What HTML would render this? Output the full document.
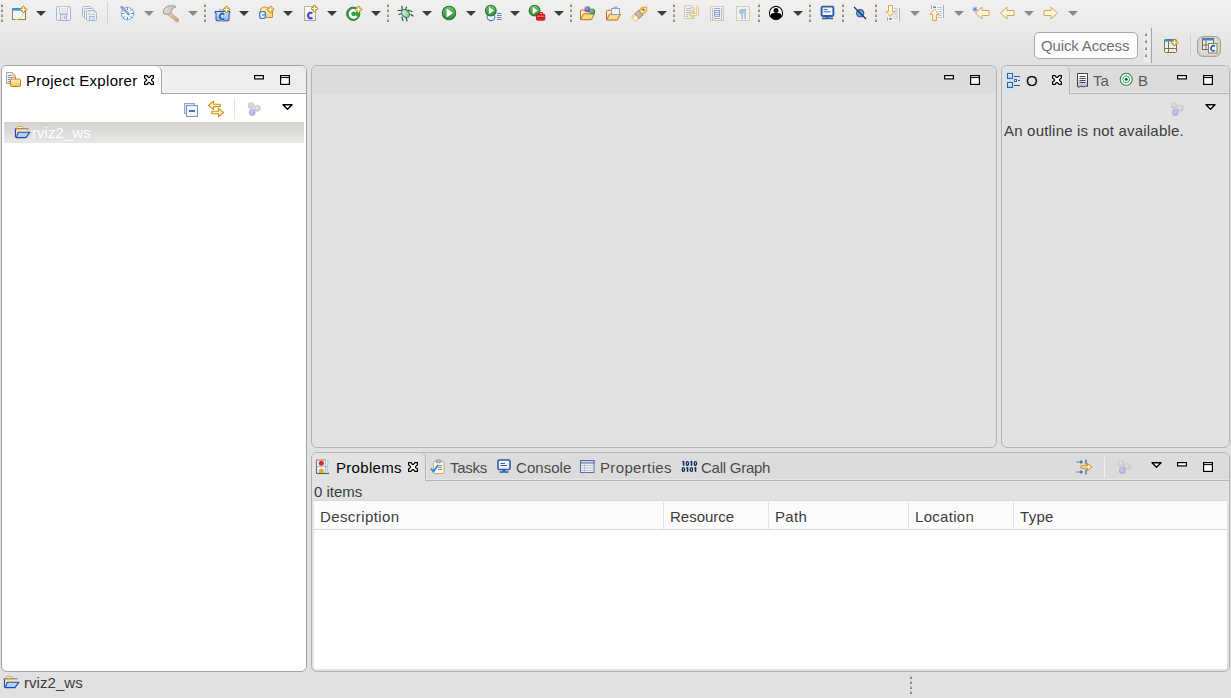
<!DOCTYPE html>
<html><head><meta charset="utf-8">
<style>
*{box-sizing:border-box;margin:0;padding:0}
html,body{width:1231px;height:698px;overflow:hidden}
body{position:relative;background:#e1e1e1;font-family:"Liberation Sans",sans-serif;font-size:15px;color:#3c3c3c}
.abs{position:absolute}
#top{position:absolute;left:0;top:0;width:1231px;height:66px;background:linear-gradient(#f1f0ef,#e1e1e1)}
.panel{position:absolute;border:1px solid #a2a2a2;border-radius:6px;overflow:hidden}
.hdr{position:absolute;left:0;right:0;top:0;height:28px;border-bottom:1px solid #b3b3b3}
.hl{position:absolute}
.txt{position:absolute;white-space:nowrap;line-height:18px}
svg.i{position:absolute;overflow:visible}
</style></head><body>
<div id="top"></div>
<svg class="i" style="left:1px;top:0px" width="2" height="24" viewBox="0 0 2 24" ><rect x="0" y="4" width="2" height="3" fill="#a19c8c"/><rect x="0" y="4" width="2" height="1" fill="#c2beb2"/><rect x="0" y="6" width="2" height="1" fill="#898472"/><rect x="0" y="9" width="2" height="3" fill="#a19c8c"/><rect x="0" y="9" width="2" height="1" fill="#c2beb2"/><rect x="0" y="11" width="2" height="1" fill="#898472"/><rect x="0" y="14" width="2" height="3" fill="#a19c8c"/><rect x="0" y="14" width="2" height="1" fill="#c2beb2"/><rect x="0" y="16" width="2" height="1" fill="#898472"/><rect x="0" y="19" width="2" height="3" fill="#a19c8c"/><rect x="0" y="19" width="2" height="1" fill="#c2beb2"/><rect x="0" y="21" width="2" height="1" fill="#898472"/></svg>
<svg class="i" style="left:11px;top:5px" width="18" height="17" viewBox="0 0 18 17" ><rect x="1.5" y="3.5" width="13" height="11" fill="#eef6fd" stroke="#9a7e3e"/>
<rect x="1" y="3" width="10" height="2.6" fill="#3c92dc"/>
<path d="M4.5 14.4 Q11 13.5 12.5 8" stroke="#f6e4a6" fill="none" stroke-width="1.2"/><path d="M12.5 0.7999999999999998 L16.2 4.5 L12.5 8.2 L8.8 4.5 Z" fill="#c6a028" stroke="#a8861a" stroke-width="0.5"/><path d="M12.5 2.1 V6.9 M10.1 4.5 H14.9" stroke="#fffce8" stroke-width="1.1"/><rect x="11.6" y="3.6" width="1.8" height="1.8" fill="#fffce8"/></svg>
<svg class="i" style="left:36px;top:11px" width="10" height="5" viewBox="0 0 10 5" ><path d="M0 0H10L5 5Z" fill="#3c3c3c"/></svg>
<svg class="i" style="left:56px;top:6px" width="15" height="15" viewBox="0 0 15 15" ><rect x="0.5" y="0.5" width="14" height="14" rx="1.5" fill="#eef1f6" stroke="#aab6cc"/>
<rect x="3.6" y="0.5" width="7.8" height="6.8" fill="#f4f4f0" stroke="#c2cad6"/>
<path d="M5 3H10M5 5H10" stroke="#d2d8e2" stroke-width="0.8"/>
<rect x="4.4" y="8.3" width="6.3" height="6.2" fill="#dfe6f0" stroke="#a4b2ca"/>
<rect x="8.2" y="10" width="1.3" height="3" fill="#a8b6d0"/></svg>
<svg class="i" style="left:82px;top:6px" width="16" height="16" viewBox="0 0 16 16" ><path d="M0.5 1.5 Q0.5 0.5 1.5 0.5 H8.5 L10.5 2.5 V9.5 Q10.5 10.5 9.5 10.5 H1.5 Q0.5 10.5 0.5 9.5 Z" fill="#eef1f6" stroke="#aab6cc"/>
<path d="M2.5 3.5 Q2.5 2.5 3.5 2.5 H10.5 L12.5 4.5 V11.5 Q12.5 12.5 11.5 12.5 H3.5 Q2.5 12.5 2.5 11.5 Z" fill="#eef1f6" stroke="#aab6cc"/>
<path d="M4.5 5.5 Q4.5 4.5 5.5 4.5 H12.5 L14.5 6.5 V13.5 Q14.5 14.5 13.5 14.5 H5.5 Q4.5 14.5 4.5 13.5 Z" fill="#eef1f6" stroke="#aab6cc"/>
<rect x="6.8" y="5" width="5.6" height="3.6" fill="#f0f2f2" stroke="#c2cad6" stroke-width="0.8"/>
<rect x="7.5" y="10.5" width="4.5" height="4" fill="#dfe6f0" stroke="#a4b2ca" stroke-width="0.9"/></svg>
<div class="abs" style="left:107px;top:2px;width:1px;height:22px;background:#d2d2d2"></div>
<svg class="i" style="left:120px;top:6px" width="15" height="15" viewBox="0 0 15 15" ><circle cx="7.5" cy="7.5" r="6.2" fill="#eef4fb" stroke="#7aaee0" stroke-width="1.2" stroke-dasharray="2.4 0.6"/>
<path d="M7.5 1.6V4M7.5 11V13.4M1.6 7.5H4M11 7.5H13.4M3.2 11.8L4.6 10.4M11.8 11.8L10.4 10.4M11.8 3.2L10.4 4.6" stroke="#6a82a8" stroke-width="0.9"/>
<path d="M1.6 1.2 L8.6 8.2" stroke="#8096c0" stroke-width="2.5" stroke-linecap="round"/>
<path d="M2.3 1.9 L8 7.6" stroke="#eef0d0" stroke-width="0.9" stroke-dasharray="1 1"/></svg>
<svg class="i" style="left:144px;top:11px" width="10" height="5" viewBox="0 0 10 5" ><path d="M0 0H10L5 5Z" fill="#8a8a8a"/></svg>
<svg class="i" style="left:162px;top:4px" width="18" height="18" viewBox="0 0 18 18" ><defs><linearGradient id="ghd" x1="0" y1="0" x2="1" y2="0"><stop offset="0" stop-color="#e8d2b2"/><stop offset="1" stop-color="#c9a57a"/></linearGradient></defs>
<path d="M6.8 7 L16.6 15.6 Q17.2 18 14.6 17.9 L4.6 9.6Z" fill="url(#ghd)" stroke="#c09a70" stroke-width="0.7"/>
<path d="M1.2 8.5 Q1.2 5 4 3 Q5.5 1.8 8 1.8 H12.5 Q13.8 2 13.5 3.2 L10 4.6 L9 8.4 L6.2 10.6 L3.6 10 Q1.2 10 1.2 8.5Z" fill="#cfcfcf" stroke="#929292" stroke-width="0.9"/>
<path d="M3 8 Q3.5 5 6 3.8" stroke="#efefef" stroke-width="0.9" fill="none"/></svg>
<svg class="i" style="left:188px;top:11px" width="10" height="5" viewBox="0 0 10 5" ><path d="M0 0H10L5 5Z" fill="#8a8a8a"/></svg>
<svg class="i" style="left:204px;top:0px" width="2" height="24" viewBox="0 0 2 24" ><rect x="0" y="4" width="2" height="3" fill="#a19c8c"/><rect x="0" y="4" width="2" height="1" fill="#c2beb2"/><rect x="0" y="6" width="2" height="1" fill="#898472"/><rect x="0" y="9" width="2" height="3" fill="#a19c8c"/><rect x="0" y="9" width="2" height="1" fill="#c2beb2"/><rect x="0" y="11" width="2" height="1" fill="#898472"/><rect x="0" y="14" width="2" height="3" fill="#a19c8c"/><rect x="0" y="14" width="2" height="1" fill="#c2beb2"/><rect x="0" y="16" width="2" height="1" fill="#898472"/><rect x="0" y="19" width="2" height="3" fill="#a19c8c"/><rect x="0" y="19" width="2" height="1" fill="#c2beb2"/><rect x="0" y="21" width="2" height="1" fill="#898472"/></svg>
<svg class="i" style="left:214px;top:5px" width="18" height="17" viewBox="0 0 18 17" ><defs><linearGradient id="gcp" x1="0" y1="0" x2="0" y2="1"><stop offset="0" stop-color="#d4eafc"/><stop offset="1" stop-color="#80b4ec"/></linearGradient></defs>
<rect x="5.5" y="4.6" width="4" height="1.8" fill="#f6c8a8" stroke="#b09080" stroke-width="0.5"/>
<path d="M1 6.5 H16 V7.8 H15 V14.8 Q15 15.8 14 15.8 H3 Q2 15.8 2 14.8 V7.8 H1Z" fill="url(#gcp)" stroke="#2846b8" stroke-width="1"/>
<path d="M10.2 9.6 A2.5 3 0 1 0 10.2 13.4" stroke="#ffffff" stroke-width="3" fill="none" opacity="0.6"/>
<path d="M10.2 9.6 A2.5 3 0 1 0 10.2 13.4" stroke="#1f5ea8" stroke-width="1.8" fill="none"/>
<path d="M12.5 0.7999999999999998 L16.2 4.5 L12.5 8.2 L8.8 4.5 Z" fill="#c6a028" stroke="#a8861a" stroke-width="0.5"/><path d="M12.5 2.1 V6.9 M10.1 4.5 H14.9" stroke="#fffce8" stroke-width="1.1"/><rect x="11.6" y="3.6" width="1.8" height="1.8" fill="#fffce8"/></svg>
<svg class="i" style="left:239px;top:11px" width="10" height="5" viewBox="0 0 10 5" ><path d="M0 0H10L5 5Z" fill="#3c3c3c"/></svg>
<svg class="i" style="left:258px;top:5px" width="17" height="16" viewBox="0 0 17 16" ><defs><linearGradient id="gcf" x1="0" y1="0" x2="0" y2="1"><stop offset="0" stop-color="#fff4c8"/><stop offset="1" stop-color="#f6cc6a"/></linearGradient></defs>
<path d="M2.5 12.5 V4.5 Q2.5 3 4 3 H4.5 L5 2 H8 L8.6 3 H14.5 V12.5 Z" fill="url(#gcf)" stroke="#cf8a2a"/>
<rect x="1.5" y="6.5" width="6" height="7" rx="1" fill="#86a8e4" stroke="#4f74c0"/>
<path d="M6.2 8.6 A1.8 2 0 1 0 6.2 11.4" stroke="#fff" stroke-width="1.4" fill="none"/>
<path d="M12.5 0.7999999999999998 L16.2 4.5 L12.5 8.2 L8.8 4.5 Z" fill="#c6a028" stroke="#a8861a" stroke-width="0.5"/><path d="M12.5 2.1 V6.9 M10.1 4.5 H14.9" stroke="#fffce8" stroke-width="1.1"/><rect x="11.6" y="3.6" width="1.8" height="1.8" fill="#fffce8"/></svg>
<svg class="i" style="left:283px;top:11px" width="10" height="5" viewBox="0 0 10 5" ><path d="M0 0H10L5 5Z" fill="#3c3c3c"/></svg>
<svg class="i" style="left:303px;top:5px" width="15" height="17" viewBox="0 0 15 17" ><defs><linearGradient id="gcfl" x1="0" y1="0" x2="0" y2="1"><stop offset="0" stop-color="#ffffff"/><stop offset="1" stop-color="#dde8f6"/></linearGradient></defs>
<path d="M1.5 1.5 H12.5 V15.5 H1.5 Z" fill="url(#gcfl)" stroke="#c4b07e"/>
<path d="M1.5 15.5 H12.5 V9" fill="none" stroke="#a8a8a0"/>
<path d="M9.3 8.4 A2.4 2.9 0 1 0 9.3 12.6" stroke="#3238c8" stroke-width="1.9" fill="none"/>
<path d="M11.5 -0.20000000000000018 L15.2 3.5 L11.5 7.2 L7.8 3.5 Z" fill="#c6a028" stroke="#a8861a" stroke-width="0.5"/><path d="M11.5 1.1 V5.9 M9.1 3.5 H13.9" stroke="#fffce8" stroke-width="1.1"/><rect x="10.6" y="2.6" width="1.8" height="1.8" fill="#fffce8"/></svg>
<svg class="i" style="left:327px;top:11px" width="10" height="5" viewBox="0 0 10 5" ><path d="M0 0H10L5 5Z" fill="#3c3c3c"/></svg>
<svg class="i" style="left:346px;top:5px" width="17" height="16" viewBox="0 0 17 16" ><circle cx="7.2" cy="8.8" r="6.6" fill="#3a9a4e" stroke="#1f7a34"/>
<path d="M10.5 6.7 A3.6 3.6 0 1 0 10.5 10.9" stroke="#fff" stroke-width="2.6" fill="none"/>
<path d="M12.5 0.7999999999999998 L16.2 4.5 L12.5 8.2 L8.8 4.5 Z" fill="#c6a028" stroke="#a8861a" stroke-width="0.5"/><path d="M12.5 2.1 V6.9 M10.1 4.5 H14.9" stroke="#fffce8" stroke-width="1.1"/><rect x="11.6" y="3.6" width="1.8" height="1.8" fill="#fffce8"/></svg>
<svg class="i" style="left:371px;top:11px" width="10" height="5" viewBox="0 0 10 5" ><path d="M0 0H10L5 5Z" fill="#3c3c3c"/></svg>
<svg class="i" style="left:387px;top:0px" width="2" height="24" viewBox="0 0 2 24" ><rect x="0" y="4" width="2" height="3" fill="#a19c8c"/><rect x="0" y="4" width="2" height="1" fill="#c2beb2"/><rect x="0" y="6" width="2" height="1" fill="#898472"/><rect x="0" y="9" width="2" height="3" fill="#a19c8c"/><rect x="0" y="9" width="2" height="1" fill="#c2beb2"/><rect x="0" y="11" width="2" height="1" fill="#898472"/><rect x="0" y="14" width="2" height="3" fill="#a19c8c"/><rect x="0" y="14" width="2" height="1" fill="#c2beb2"/><rect x="0" y="16" width="2" height="1" fill="#898472"/><rect x="0" y="19" width="2" height="3" fill="#a19c8c"/><rect x="0" y="19" width="2" height="1" fill="#c2beb2"/><rect x="0" y="21" width="2" height="1" fill="#898472"/></svg>
<svg class="i" style="left:397px;top:5px" width="17" height="17" viewBox="0 0 17 17" ><defs><radialGradient id="gbug" cx="0.4" cy="0.35" r="0.7"><stop offset="0" stop-color="#e6f6de"/><stop offset="1" stop-color="#7cc070"/></radialGradient></defs>
<path d="M5 1V5 M9.5 2 L8.5 4.5 M1 5.5 H5 M11 5 L15 6.5 M2 9.5 L5 8.5 M14 9.5 L16 11 M5 12 L5.8 15.5 M9 12.5 L10 15.8" stroke="#2b4f52" stroke-width="1.2" stroke-linecap="round"/>
<ellipse cx="8.5" cy="8.5" rx="3.3" ry="4.6" transform="rotate(-45 8.5 8.5)" fill="url(#gbug)" stroke="#2a6e86" stroke-width="1"/>
<path d="M6.6 6.8 L10.4 10.4" stroke="#8ccc80" stroke-width="0.8"/></svg>
<svg class="i" style="left:422px;top:11px" width="10" height="5" viewBox="0 0 10 5" ><path d="M0 0H10L5 5Z" fill="#3c3c3c"/></svg>
<svg class="i" style="left:441px;top:5px" width="16" height="16" viewBox="0 0 16 16" ><defs><linearGradient id="grun8080" x1="0" y1="0" x2="0" y2="1"><stop offset="0" stop-color="#74c46a"/><stop offset="1" stop-color="#2e8a3a"/></linearGradient></defs><circle cx="8" cy="8" r="6.7" fill="url(#grun8080)" stroke="#1f7a30" stroke-width="1.1"/>
<path d="M5.588 3.5779999999999994 L12.02 8 L5.588 12.422 Z" fill="#fff"/></svg>
<svg class="i" style="left:466px;top:11px" width="10" height="5" viewBox="0 0 10 5" ><path d="M0 0H10L5 5Z" fill="#3c3c3c"/></svg>
<svg class="i" style="left:484px;top:4px" width="18" height="18" viewBox="0 0 18 18" ><circle cx="7" cy="12.8" r="3.8" fill="#f0f6fc" stroke="#4e86c8" stroke-width="1.1"/>
<path d="M13 9.5H17.5M13 11.5H17.5M13 13.5H17.5M13 15.5H17.5" stroke="#5a80c0" stroke-width="1"/><defs><linearGradient id="grun6866" x1="0" y1="0" x2="0" y2="1"><stop offset="0" stop-color="#74c46a"/><stop offset="1" stop-color="#2e8a3a"/></linearGradient></defs><circle cx="6.8" cy="6.6" r="5.4" fill="url(#grun6866)" stroke="#1f7a30" stroke-width="1.1"/>
<path d="M4.856 3.035999999999999 L10.04 6.6 L4.856 10.164 Z" fill="#fff"/></svg>
<svg class="i" style="left:510px;top:11px" width="10" height="5" viewBox="0 0 10 5" ><path d="M0 0H10L5 5Z" fill="#3c3c3c"/></svg>
<svg class="i" style="left:528px;top:4px" width="18" height="17" viewBox="0 0 18 17" ><defs><linearGradient id="grun6666" x1="0" y1="0" x2="0" y2="1"><stop offset="0" stop-color="#74c46a"/><stop offset="1" stop-color="#2e8a3a"/></linearGradient></defs><circle cx="6.6" cy="6.6" r="5.4" fill="url(#grun6666)" stroke="#1f7a30" stroke-width="1.1"/>
<path d="M4.656 3.035999999999999 L9.84 6.6 L4.656 10.164 Z" fill="#fff"/><rect x="8.5" y="10.2" width="8.3" height="6" rx="0.8" fill="#e82a2a" stroke="#b80808" stroke-width="0.8"/>
<rect x="11" y="8.6" width="3.4" height="1.8" fill="none" stroke="#d01818" stroke-width="0.9"/>
<path d="M9 12.4H16.3" stroke="#ff8a8a" stroke-width="0.7"/><path d="M9 13.6H16.3" stroke="#801010" stroke-width="0.6"/></svg>
<svg class="i" style="left:554px;top:11px" width="10" height="5" viewBox="0 0 10 5" ><path d="M0 0H10L5 5Z" fill="#3c3c3c"/></svg>
<svg class="i" style="left:570px;top:0px" width="2" height="24" viewBox="0 0 2 24" ><rect x="0" y="4" width="2" height="3" fill="#a19c8c"/><rect x="0" y="4" width="2" height="1" fill="#c2beb2"/><rect x="0" y="6" width="2" height="1" fill="#898472"/><rect x="0" y="9" width="2" height="3" fill="#a19c8c"/><rect x="0" y="9" width="2" height="1" fill="#c2beb2"/><rect x="0" y="11" width="2" height="1" fill="#898472"/><rect x="0" y="14" width="2" height="3" fill="#a19c8c"/><rect x="0" y="14" width="2" height="1" fill="#c2beb2"/><rect x="0" y="16" width="2" height="1" fill="#898472"/><rect x="0" y="19" width="2" height="3" fill="#a19c8c"/><rect x="0" y="19" width="2" height="1" fill="#c2beb2"/><rect x="0" y="21" width="2" height="1" fill="#898472"/></svg>
<svg class="i" style="left:579px;top:5px" width="17" height="16" viewBox="0 0 17 16" ><g transform="translate(0,1.2)"><path d="M1.5 13 V4.8 Q1.5 3.8 2.5 3.8 H5.2 L6.2 4.8 H11.8 V7.5" fill="#fff0c4" stroke="#b8701c"/>
<path d="M1.5 13.5 L4.6 7.6 H15.5 L12.4 13.5 Z" fill="#f9d98a" stroke="#b8701c" stroke-linejoin="round"/></g><defs><radialGradient id="gsp1" cx="0.4" cy="0.35" r="0.7"><stop offset="0" stop-color="#a898e0"/><stop offset="1" stop-color="#5a48a8"/></radialGradient><radialGradient id="gsp2" cx="0.4" cy="0.35" r="0.7"><stop offset="0" stop-color="#7cc888"/><stop offset="1" stop-color="#2a8038"/></radialGradient></defs>
<circle cx="8.4" cy="4.2" r="3" fill="url(#gsp1)"/>
<circle cx="13.2" cy="6.6" r="3" fill="url(#gsp2)"/></svg>
<svg class="i" style="left:605px;top:6px" width="17" height="15" viewBox="0 0 17 15" ><g transform="translate(0,0.5)"><path d="M1.5 13 V4.8 Q1.5 3.8 2.5 3.8 H5.2 L6.2 4.8 H11.8 V7.5" fill="#fff0c4" stroke="#b8701c"/>
<path d="M1.5 13.5 L4.6 7.6 H15.5 L12.4 13.5 Z" fill="#f9d98a" stroke="#b8701c" stroke-linejoin="round"/></g><rect x="6.5" y="2.5" width="8" height="6" fill="#f2f5fb" stroke="#8c9cba"/>
<rect x="8.8" y="0.8" width="3.4" height="1.8" rx="0.6" fill="#a8b8d8" stroke="#8090b8" stroke-width="0.5"/></svg>
<svg class="i" style="left:631px;top:4px" width="18" height="18" viewBox="0 0 18 18" ><defs><linearGradient id="gpen" x1="0" y1="0" x2="0" y2="1"><stop offset="0" stop-color="#f0a830"/><stop offset="0.5" stop-color="#fde7a0"/><stop offset="1" stop-color="#f0b040"/></linearGradient>
<linearGradient id="gpen2" x1="0" y1="0" x2="0" y2="1"><stop offset="0" stop-color="#f8d040"/><stop offset="0.6" stop-color="#ffffff"/><stop offset="1" stop-color="#f8e070"/></linearGradient></defs>
<g transform="translate(9.4 9) rotate(-42) scale(0.9)">
<path d="M-0.5 -3.4 H6 L9.8 0 L6 3.4 H-0.5 Z" fill="url(#gpen)" stroke="#e09a30" stroke-width="0.8"/>
<path d="M-10.2 -3.4 H-5 V3.4 H-10.2 Z" fill="url(#gpen2)" stroke="#f0b040" stroke-width="0.6"/>
<path d="M-5.2 -3.5 Q-1 -3.9 0 -3.5 Q1 0 0 3.5 Q-1 3.9 -5.2 3.5 Q-4.2 0 -5.2 -3.5Z" fill="#bcb8c4" stroke="#8a7450" stroke-width="0.8"/>
<ellipse cx="5" cy="-0.5" rx="0.9" ry="1.2" fill="#2a4aa0"/>
</g></svg>
<svg class="i" style="left:657px;top:11px" width="10" height="5" viewBox="0 0 10 5" ><path d="M0 0H10L5 5Z" fill="#3c3c3c"/></svg>
<svg class="i" style="left:673px;top:0px" width="2" height="24" viewBox="0 0 2 24" ><rect x="0" y="4" width="2" height="3" fill="#a19c8c"/><rect x="0" y="4" width="2" height="1" fill="#c2beb2"/><rect x="0" y="6" width="2" height="1" fill="#898472"/><rect x="0" y="9" width="2" height="3" fill="#a19c8c"/><rect x="0" y="9" width="2" height="1" fill="#c2beb2"/><rect x="0" y="11" width="2" height="1" fill="#898472"/><rect x="0" y="14" width="2" height="3" fill="#a19c8c"/><rect x="0" y="14" width="2" height="1" fill="#c2beb2"/><rect x="0" y="16" width="2" height="1" fill="#898472"/><rect x="0" y="19" width="2" height="3" fill="#a19c8c"/><rect x="0" y="19" width="2" height="1" fill="#c2beb2"/><rect x="0" y="21" width="2" height="1" fill="#898472"/></svg>
<svg class="i" style="left:683px;top:4px" width="17" height="16" viewBox="0 0 17 16" ><path d="M1.5 1.5 H8.5 L11 4 V14.5 H1.5 Z" fill="#f0f3f8" stroke="#d6caa4"/>
<path d="M8.5 1.5 V4 H11" fill="#e6dcc0" stroke="#d6caa4" stroke-width="0.8"/>
<path d="M3 4.3H8.5M3 6.4H8.5M3 8.5H8M3 10.6H5M3 12.4H5" stroke="#a4b2d0" stroke-width="0.9"/>
<path d="M14.5 3 V10.5 H9 M10 7.5 L7 10.5 L10 13.5" stroke="#dcbf86" stroke-width="2.6" fill="none" stroke-linejoin="round" stroke-linecap="round"/>
<path d="M14.5 3 V10.5 H9 M10 7.5 L7 10.5 L10 13.5" stroke="#fdf4dc" stroke-width="1" fill="none" stroke-linejoin="round" stroke-linecap="round"/></svg>
<svg class="i" style="left:709px;top:5px" width="16" height="17" viewBox="0 0 16 17" ><rect x="1.5" y="1.5" width="13" height="14" fill="#eef2f8" stroke="#d8cca4"/>
<rect x="3" y="3.6" width="1.2" height="1.2" fill="#8ea4c8"/><rect x="3" y="5.6" width="1.2" height="1.2" fill="#8ea4c8"/><rect x="3" y="7.6" width="1.2" height="1.2" fill="#8ea4c8"/><rect x="3" y="9.6" width="1.2" height="1.2" fill="#8ea4c8"/><rect x="3" y="11.6" width="1.2" height="1.2" fill="#8ea4c8"/><rect x="3" y="13.6" width="1.2" height="1.2" fill="#8ea4c8"/><rect x="12" y="3.6" width="1.2" height="1.2" fill="#8ea4c8"/><rect x="12" y="5.6" width="1.2" height="1.2" fill="#8ea4c8"/><rect x="12" y="7.6" width="1.2" height="1.2" fill="#8ea4c8"/><rect x="12" y="9.6" width="1.2" height="1.2" fill="#8ea4c8"/><rect x="12" y="11.6" width="1.2" height="1.2" fill="#8ea4c8"/><rect x="12" y="13.6" width="1.2" height="1.2" fill="#8ea4c8"/>
<path d="M5 3.5H11M5 13.5H11" stroke="#9cb0d2" stroke-width="1"/>
<rect x="5.5" y="5.5" width="5" height="5.8" fill="#f4f7fc" stroke="#88a2c8"/>
<path d="M5.5 7.4H10.5M5.5 9.4H10.5" stroke="#88a2c8" stroke-width="0.9"/></svg>
<svg class="i" style="left:735px;top:5px" width="16" height="17" viewBox="0 0 16 17" ><rect x="1.5" y="1.5" width="13" height="14" fill="#eef2f8" stroke="#d8cca4"/>
<path d="M12 4 H6.8 Q4 4 4 6.8 Q4 9.5 6.8 9.5 H7 Z" fill="#a8c0dc"/>
<path d="M7.2 4 V14.2 M10.2 4 V14.2" stroke="#a8c0dc" stroke-width="1.6"/></svg>
<svg class="i" style="left:758px;top:0px" width="2" height="24" viewBox="0 0 2 24" ><rect x="0" y="4" width="2" height="3" fill="#a19c8c"/><rect x="0" y="4" width="2" height="1" fill="#c2beb2"/><rect x="0" y="6" width="2" height="1" fill="#898472"/><rect x="0" y="9" width="2" height="3" fill="#a19c8c"/><rect x="0" y="9" width="2" height="1" fill="#c2beb2"/><rect x="0" y="11" width="2" height="1" fill="#898472"/><rect x="0" y="14" width="2" height="3" fill="#a19c8c"/><rect x="0" y="14" width="2" height="1" fill="#c2beb2"/><rect x="0" y="16" width="2" height="1" fill="#898472"/><rect x="0" y="19" width="2" height="3" fill="#a19c8c"/><rect x="0" y="19" width="2" height="1" fill="#c2beb2"/><rect x="0" y="21" width="2" height="1" fill="#898472"/></svg>
<svg class="i" style="left:768px;top:5px" width="17" height="16" viewBox="0 0 17 16" ><circle cx="8" cy="8" r="6.6" fill="#fff" stroke="#111" stroke-width="1.1"/>
<circle cx="8" cy="5.4" r="2.5" fill="#000"/>
<path d="M2.4 11.2 Q2.8 8.2 5.6 8.1 H10.4 Q13.2 8.2 13.6 11.2 Q12 14.6 8 14.6 Q4 14.6 2.4 11.2Z" fill="#000"/></svg>
<svg class="i" style="left:793px;top:11px" width="10" height="5" viewBox="0 0 10 5" ><path d="M0 0H10L5 5Z" fill="#3c3c3c"/></svg>
<svg class="i" style="left:809px;top:0px" width="2" height="24" viewBox="0 0 2 24" ><rect x="0" y="4" width="2" height="3" fill="#a19c8c"/><rect x="0" y="4" width="2" height="1" fill="#c2beb2"/><rect x="0" y="6" width="2" height="1" fill="#898472"/><rect x="0" y="9" width="2" height="3" fill="#a19c8c"/><rect x="0" y="9" width="2" height="1" fill="#c2beb2"/><rect x="0" y="11" width="2" height="1" fill="#898472"/><rect x="0" y="14" width="2" height="3" fill="#a19c8c"/><rect x="0" y="14" width="2" height="1" fill="#c2beb2"/><rect x="0" y="16" width="2" height="1" fill="#898472"/><rect x="0" y="19" width="2" height="3" fill="#a19c8c"/><rect x="0" y="19" width="2" height="1" fill="#c2beb2"/><rect x="0" y="21" width="2" height="1" fill="#898472"/></svg>
<svg class="i" style="left:820px;top:5px" width="16" height="16" viewBox="0 0 16 16" ><rect x="1.6" y="1.6" width="11.8" height="9.4" rx="1.2" fill="#f2f8fe" stroke="#2c5ca6" stroke-width="1.9"/>
<path d="M3.6 4.6H7.6M3.6 6.8H10.6" stroke="#3a4c98" stroke-width="0.9"/>
<rect x="6" y="11.2" width="3" height="1.6" fill="#2c5ca6"/><rect x="2" y="12.6" width="11" height="1.6" rx="0.5" fill="#2c5ca6"/></svg>
<svg class="i" style="left:842px;top:0px" width="2" height="24" viewBox="0 0 2 24" ><rect x="0" y="4" width="2" height="3" fill="#a19c8c"/><rect x="0" y="4" width="2" height="1" fill="#c2beb2"/><rect x="0" y="6" width="2" height="1" fill="#898472"/><rect x="0" y="9" width="2" height="3" fill="#a19c8c"/><rect x="0" y="9" width="2" height="1" fill="#c2beb2"/><rect x="0" y="11" width="2" height="1" fill="#898472"/><rect x="0" y="14" width="2" height="3" fill="#a19c8c"/><rect x="0" y="14" width="2" height="1" fill="#c2beb2"/><rect x="0" y="16" width="2" height="1" fill="#898472"/><rect x="0" y="19" width="2" height="3" fill="#a19c8c"/><rect x="0" y="19" width="2" height="1" fill="#c2beb2"/><rect x="0" y="21" width="2" height="1" fill="#898472"/></svg>
<svg class="i" style="left:853px;top:6px" width="14" height="14" viewBox="0 0 14 14" ><circle cx="7.2" cy="7.2" r="3.6" fill="#6aa6d0" stroke="#2a5e92" stroke-width="1.1"/>
<path d="M1 1 L13 13" stroke="#1e2e7a" stroke-width="1.3"/></svg>
<svg class="i" style="left:875px;top:0px" width="2" height="24" viewBox="0 0 2 24" ><rect x="0" y="4" width="2" height="3" fill="#a19c8c"/><rect x="0" y="4" width="2" height="1" fill="#c2beb2"/><rect x="0" y="6" width="2" height="1" fill="#898472"/><rect x="0" y="9" width="2" height="3" fill="#a19c8c"/><rect x="0" y="9" width="2" height="1" fill="#c2beb2"/><rect x="0" y="11" width="2" height="1" fill="#898472"/><rect x="0" y="14" width="2" height="3" fill="#a19c8c"/><rect x="0" y="14" width="2" height="1" fill="#c2beb2"/><rect x="0" y="16" width="2" height="1" fill="#898472"/><rect x="0" y="19" width="2" height="3" fill="#a19c8c"/><rect x="0" y="19" width="2" height="1" fill="#c2beb2"/><rect x="0" y="21" width="2" height="1" fill="#898472"/></svg>
<svg class="i" style="left:885px;top:4px" width="16" height="18" viewBox="0 0 16 18" ><rect x="2" y="3.5" width="13" height="13.5" fill="#f3f5f7"/>
<path d="M14.5 4V17 M2.5 13V17" stroke="#a6b2c2" stroke-width="1"/>
<rect x="4" y="14" width="3" height="1.6" fill="#6e86c0"/>
<path d="M9 4.3H13M10 6.4H13M10 8.4H13M9 10.4H13M8 12.3H9.5M10.5 12.3H13M8.5 14.4H13" stroke="#b4c0dc" stroke-width="0.9"/>
<defs><linearGradient id="gan" x1="0" y1="0" x2="0" y2="1"><stop offset="0" stop-color="#ffffff"/><stop offset="1" stop-color="#f8e4a8"/></linearGradient></defs>
<path d="M3.5 1.5 H7.5 V7.5 H10 L5.5 12.6 L1 7.5 H3.5 Z" fill="url(#gan)" stroke="#d4a860" stroke-width="1" stroke-linejoin="round"/></svg>
<svg class="i" style="left:910px;top:11px" width="10" height="5" viewBox="0 0 10 5" ><path d="M0 0H10L5 5Z" fill="#8a8a8a"/></svg>
<svg class="i" style="left:929px;top:4px" width="16" height="18" viewBox="0 0 16 18" ><rect x="2" y="1" width="13" height="14" fill="#f3f5f7"/>
<path d="M14.5 1V14 M2.5 1V5.5" stroke="#a6b2c2" stroke-width="1"/>
<rect x="4" y="2.5" width="3" height="1.6" fill="#6e86c0"/>
<path d="M8 3.5H13M8.5 5.5H10M11 5.5H13M9.5 7.5H13M10 9.5H13M9.5 11.5H13M8.5 13.5H13" stroke="#b4c0dc" stroke-width="0.9"/>
<path d="M3.5 16.5 H7.5 V10.5 H10 L5.5 5.2 L1 10.5 H3.5 Z" fill="url(#gan)" stroke="#d4a860" stroke-width="1" stroke-linejoin="round"/></svg>
<svg class="i" style="left:954px;top:11px" width="10" height="5" viewBox="0 0 10 5" ><path d="M0 0H10L5 5Z" fill="#8a8a8a"/></svg>
<svg class="i" style="left:972px;top:6px" width="18" height="14" viewBox="0 0 18 14" ><path d="M17 4.5 H10 V1 L3.5 7 L10 13 V9.5 H17 Z" fill="#fdf3d6" stroke="#d0a860" stroke-linejoin="round"/>
<path d="M3 0.5V6M0.5 3.2H5.5M1.2 1.4L4.8 5M4.8 1.4L1.2 5" stroke="#5a88c8" stroke-width="0.9"/></svg>
<svg class="i" style="left:999px;top:6px" width="16" height="14" viewBox="0 0 16 14" ><path d="M15 4.5 H8 V1 L1.5 7 L8 13 V9.5 H15 Z" fill="#fdf3d6" stroke="#d0a860" stroke-linejoin="round"/></svg>
<svg class="i" style="left:1024px;top:11px" width="10" height="5" viewBox="0 0 10 5" ><path d="M0 0H10L5 5Z" fill="#8a8a8a"/></svg>
<svg class="i" style="left:1043px;top:6px" width="16" height="14" viewBox="0 0 16 14" ><path d="M1 4.5 H8 V1 L14.5 7 L8 13 V9.5 H1 Z" fill="#fdf3d6" stroke="#d0a860" stroke-linejoin="round"/></svg>
<svg class="i" style="left:1068px;top:11px" width="10" height="5" viewBox="0 0 10 5" ><path d="M0 0H10L5 5Z" fill="#8a8a8a"/></svg>

<!-- Project Explorer -->
<div class="panel" style="left:1px;top:65px;width:306px;height:607px;background:#fff">
  <div class="hdr" style="background:#ededed;border-bottom-color:#a2a2a2"></div>
  <div class="hl" style="left:161px;top:26px;right:0;height:1px;background:#f6f6f6"></div>
  <div class="abs" style="left:0;top:0;width:160px;height:28px;background:#fff;border-right:1px solid #a2a2a2;border-top-right-radius:6px"></div>
  <div class="hl" style="left:161px;top:4px;width:1px;height:23px;background:#f6f6f6"></div>
  <div class="txt" style="left:24px;top:6px;color:#000;letter-spacing:0.3px">Project Explorer</div>
</div>

<!-- Editor -->
<div class="panel" style="left:311px;top:65px;width:686px;height:383px;background:#e2e2e2;border-color:#b3b3b3">
  <div class="abs" style="left:0;right:0;top:0;height:28px;background:#dcdcdc"></div>
</div>

<!-- Outline -->
<div class="panel" style="left:1001px;top:65px;width:229px;height:383px;background:#e2e2e2;border-color:#b3b3b3">
  <div class="hdr" style="background:#dcdcdc"></div>
  <div class="hl" style="left:69px;top:26px;right:0;height:1px;background:#e6e6e6"></div>
  <div class="abs" style="left:0;top:0;width:68px;height:28px;background:#e2e2e2;border-right:1px solid #b3b3b3;border-top-right-radius:6px"></div>
  <div class="hl" style="left:68px;top:4px;width:1px;height:23px;background:#e6e6e6"></div>
  <div class="txt" style="left:24px;top:6px;color:#000">O</div>
  <div class="txt" style="left:91px;top:6px;color:#5a5a5a">Ta</div>
  <div class="txt" style="left:136px;top:6px;color:#5a5a5a">B</div>
  <div class="txt" style="left:2px;top:56px;letter-spacing:0.2px">An outline is not available.</div>
</div>

<!-- Problems -->
<div class="panel" style="left:311px;top:452px;width:919px;height:220px;background:#e2e2e2;border-color:#b3b3b3">
  <div class="hdr" style="background:#dcdcdc"></div>
  <div class="hl" style="left:115px;top:26px;right:0;height:1px;background:#e6e6e6"></div>
  <div class="abs" style="left:0;top:0;width:114px;height:28px;background:#e2e2e2;border-right:1px solid #b3b3b3;border-top-right-radius:6px"></div>
  <div class="hl" style="left:114px;top:4px;width:1px;height:23px;background:#e6e6e6"></div>
  <div class="txt" style="left:24px;top:6px;color:#000;letter-spacing:0.3px">Problems</div>
  <div class="txt" style="left:2px;top:30px">0 items</div>
  <div class="abs" style="left:2px;top:47px;width:913px;height:1px;background:#dbd9d7"></div>
  <div class="abs" style="left:2px;top:48px;width:913px;height:168px;background:#fff"></div>
  <div class="abs" style="left:2px;top:48px;width:913px;height:29px;background:#fcfcfc;border-bottom:1px solid #dadada"></div>
  <div class="abs" style="left:351px;top:49px;width:1px;height:27px;background:#e2e2e2"></div>
  <div class="abs" style="left:456px;top:49px;width:1px;height:27px;background:#e2e2e2"></div>
  <div class="abs" style="left:596px;top:49px;width:1px;height:27px;background:#e2e2e2"></div>
  <div class="abs" style="left:701px;top:49px;width:1px;height:27px;background:#e2e2e2"></div>
  <div class="txt" style="left:8px;top:55px;letter-spacing:0.4px">Description</div>
  <div class="txt" style="left:358px;top:55px;letter-spacing:0px">Resource</div>
  <div class="txt" style="left:463px;top:55px;letter-spacing:0.3px">Path</div>
  <div class="txt" style="left:603px;top:55px;letter-spacing:0.3px">Location</div>
  <div class="txt" style="left:708px;top:55px;letter-spacing:0.3px">Type</div>
</div>

<div class="abs" style="left:1034px;top:32px;width:104px;height:27px;border:1px solid #a9a9a9;border-radius:5px;background:#fdfdfd"></div>
<div class="txt" style="left:1041px;top:37px;color:#717171;letter-spacing:-0.15px;">Quick Access</div>
<div class="abs" style="left:1144px;top:27px;width:6px;height:36px;background:#ececec"></div>
<svg class="i" style="left:1145px;top:33px" width="2" height="26" viewBox="0 0 2 26" ><rect x="0" y="0" width="2" height="3" fill="#a19c8c"/><rect x="0" y="0" width="2" height="1" fill="#c2beb2"/><rect x="0" y="2" width="2" height="1" fill="#898472"/><rect x="0" y="7" width="2" height="3" fill="#a19c8c"/><rect x="0" y="7" width="2" height="1" fill="#c2beb2"/><rect x="0" y="9" width="2" height="1" fill="#898472"/><rect x="0" y="14" width="2" height="3" fill="#a19c8c"/><rect x="0" y="14" width="2" height="1" fill="#c2beb2"/><rect x="0" y="16" width="2" height="1" fill="#898472"/><rect x="0" y="21" width="2" height="3" fill="#a19c8c"/><rect x="0" y="21" width="2" height="1" fill="#c2beb2"/><rect x="0" y="23" width="2" height="1" fill="#898472"/></svg>
<div class="abs" style="left:1151px;top:28px;width:1px;height:35px;background:#a6a6a6"></div>
<svg class="i" style="left:1163px;top:37px" width="17" height="17" viewBox="0 0 17 17" ><rect x="1.5" y="2.5" width="12" height="13" rx="1" fill="#e4f2fc" stroke="#8a6e3a"/>
<rect x="1.5" y="2.5" width="9" height="2" fill="#3a8ad6"/>
<path d="M5.5 4.5V15.5 M1.5 11.5H13.5" stroke="#8a6e3a"/>
<path d="M8 14 L12 11.8" stroke="#e8d8a0" stroke-width="0.8"/>
<path d="M11.5 1.7999999999999998 L15.2 5.5 L11.5 9.2 L7.8 5.5 Z" fill="#c6a028" stroke="#a8861a" stroke-width="0.5"/><path d="M11.5 3.1 V7.9 M9.1 5.5 H13.9" stroke="#fffce8" stroke-width="1.1"/><rect x="10.6" y="4.6" width="1.8" height="1.8" fill="#fffce8"/></svg>
<div class="abs" style="left:1190px;top:35px;width:1px;height:22px;background:#cfcfcf"></div>
<div class="abs" style="left:1197px;top:36px;width:24px;height:21px;border:1px solid #a2a2a2;border-radius:6px;background:#d9d9d9;box-shadow:inset 0 0 2px rgba(0,0,0,.22)"></div>
<svg class="i" style="left:1202px;top:37px" width="16" height="17" viewBox="0 0 16 17" ><rect x="0.5" y="1.5" width="11" height="11" fill="#e4f2fc" stroke="#7a6a40"/>
<rect x="0.5" y="1.5" width="11" height="2" fill="#3a8ad6"/>
<path d="M4 3.5V12.5 M0.5 8H8" stroke="#7a6a40"/>
<rect x="6.5" y="6.5" width="8.5" height="9.5" fill="#f4f8fc" stroke="#9a7a30"/>
<path d="M13 9.3 A2.4 2.7 0 1 0 13 13.3" stroke="#2060b0" stroke-width="1.6" fill="none"/></svg>
<svg class="i" style="left:5px;top:72px" width="17" height="17" viewBox="0 0 17 17" ><path d="M1.5 0.5 H7.5 L10.5 3.5 V11.5 H1.5 Z" fill="#f4f6fa" stroke="#b4a27a"/>
<path d="M7.5 0.5 V3.5 H10.5" fill="#e8e0c8" stroke="#c8b890" stroke-width="0.8"/>
<path d="M2.8 3.5H6.5M2.8 5.5H6.5M2.8 7.5H5.5M2.8 9.5H5.5" stroke="#5a82cc" stroke-width="0.9"/>
<defs><linearGradient id="gpf" x1="0" y1="0" x2="0" y2="1"><stop offset="0" stop-color="#fff0b8"/><stop offset="1" stop-color="#f6c654"/></linearGradient></defs>
<rect x="5.5" y="7" width="10" height="7.5" rx="1.2" fill="url(#gpf)" stroke="#c27e2a"/>
<path d="M6.5 7 V6 Q6.5 5.3 7.2 5.3 H9.5 Q10.2 5.3 10.2 6 V7" fill="#fde9b0" stroke="#c27e2a" stroke-width="0.9"/></svg>
<svg class="i" style="left:144px;top:75px" width="10" height="10" viewBox="0 0 10 10" ><path d="M0.6 0.6H3L4.4 2.4H5.6L7 0.6H9.4V3L7.6 4.4V5.6L9.4 7V9.4H7L5.6 7.6H4.4L3 9.4H0.6V7L2.4 5.6V4.4L0.6 3Z" fill="#fff" stroke="#000" stroke-width="1.2" stroke-linejoin="round"/></svg>
<svg class="i" style="left:254px;top:75px" width="10" height="5" viewBox="0 0 10 5" ><rect x="0.6" y="0.6" width="8.8" height="3.3" fill="#fff" stroke="#000" stroke-width="1.2"/></svg>
<svg class="i" style="left:280px;top:75px" width="10" height="10" viewBox="0 0 10 10" ><rect x="0.6" y="0.6" width="8.8" height="8.8" fill="#fff" stroke="#000" stroke-width="1.2"/><path d="M1 2.6H9" stroke="#000" stroke-width="1"/></svg>
<svg class="i" style="left:184px;top:103px" width="15" height="15" viewBox="0 0 15 15" ><rect x="0.5" y="0.5" width="10" height="10" fill="#dbe6f6" stroke="#8aa6d4"/>
<rect x="2.5" y="2.5" width="11" height="11" fill="#eef4fc" stroke="#7a92c0"/>
<path d="M5 8H11" stroke="#1e4a9a" stroke-width="1.5"/></svg>
<svg class="i" style="left:207px;top:100px" width="18" height="18" viewBox="0 0 18 18" ><path d="M1.4 5.4 L6.5 1.3 V4.3 H13.3 V6.6 H6.5 V9.5 Z" fill="#fdf0c0" stroke="#d0951c" stroke-width="1.1" stroke-linejoin="round"/>
<path d="M16.6 12.5 L11.5 8.4 V11.3 H4.7 V13.7 H11.5 V16.6 Z" fill="#fdf0c0" stroke="#d0951c" stroke-width="1.1" stroke-linejoin="round"/></svg>
<div class="abs" style="left:234px;top:98px;width:1px;height:21px;background:#e4e4e4"></div>
<svg class="i" style="left:247px;top:103px" width="14" height="14" viewBox="0 0 14 14" ><defs><radialGradient id="gsg" cx="0.45" cy="0.4" r="0.6"><stop offset="0" stop-color="#e4e4e4"/><stop offset="1" stop-color="#c4c4c4"/></radialGradient><radialGradient id="gsp" cx="0.45" cy="0.4" r="0.6"><stop offset="0" stop-color="#cfc8ee"/><stop offset="1" stop-color="#a89ed6"/></radialGradient></defs>
<circle cx="4" cy="2.5" r="3" fill="url(#gsg)" stroke="#c2c2c2" stroke-width="0.5"/>
<circle cx="10.3" cy="5.3" r="3.1" fill="url(#gsg)" stroke="#c2c2c2" stroke-width="0.5"/>
<circle cx="5.2" cy="9.4" r="3.3" fill="url(#gsp)"/>
<path d="M2.6 8.6H7.8M2.6 10.6H7.8" stroke="#c8c0ea" stroke-width="0.7"/></svg>
<svg class="i" style="left:282px;top:104px" width="11" height="6" viewBox="0 0 11 6" ><path d="M1 0.8 H10 L5.5 5.2 Z" fill="#fff" stroke="#000" stroke-width="1.4" stroke-linejoin="round"/></svg>
<div class="abs" style="left:4px;top:122px;width:300px;height:21px;background:linear-gradient(#d4d1cd,#e8e8e7)"></div>
<svg class="i" style="left:14px;top:126px" width="17" height="13" viewBox="0 0 17 13" ><rect x="3.5" y="0.5" width="5.5" height="2.5" rx="0.6" fill="#fdf4d8" stroke="#d4aa5a" stroke-width="1"/>
<rect x="2" y="3" width="11" height="7.5" fill="#fde7a0"/>
<path d="M0.5 2.8H14.5" stroke="#8c7272" stroke-width="1.1"/>
<path d="M1.5 3.2 V11.5" stroke="#2c44b8" stroke-width="1.2"/>
<path d="M2.2 11.6 L4.3 6.2 H15.9 L11.9 11.6 Z" fill="#aad4f8" stroke="#2c44b8" stroke-width="1.1" stroke-linejoin="round"/></svg>
<div class="txt" style="left:32px;top:124px;color:#ffffff;letter-spacing:0.05px;">rviz2_ws</div>
<svg class="i" style="left:1006px;top:72px" width="15" height="17" viewBox="0 0 15 17" ><defs><linearGradient id="gol" x1="0" y1="0" x2="0" y2="1"><stop offset="0" stop-color="#ffffff"/><stop offset="1" stop-color="#9cc8f4"/></linearGradient></defs>
<rect x="1.5" y="1.5" width="5" height="5" fill="url(#gol)" stroke="#1a6ab8" stroke-width="1.1"/>
<rect x="1.5" y="10.5" width="5" height="5" fill="url(#gol)" stroke="#1a6ab8" stroke-width="1.1"/>
<rect x="8.5" y="7.5" width="2" height="2" fill="#fff" stroke="#1a6ab8" stroke-width="1"/>
<path d="M8 4.5H14M12 8.5H14M8 13.5H14" stroke="#1e5a98" stroke-width="1"/></svg>
<svg class="i" style="left:1052px;top:75px" width="10" height="10" viewBox="0 0 10 10" ><path d="M0.6 0.6H3L4.4 2.4H5.6L7 0.6H9.4V3L7.6 4.4V5.6L9.4 7V9.4H7L5.6 7.6H4.4L3 9.4H0.6V7L2.4 5.6V4.4L0.6 3Z" fill="#fff" stroke="#000" stroke-width="1.2" stroke-linejoin="round"/></svg>
<svg class="i" style="left:1076px;top:72px" width="13" height="17" viewBox="0 0 13 17" ><defs><linearGradient id="gtl" x1="0" y1="0" x2="0" y2="1"><stop offset="0.2" stop-color="#ffffff"/><stop offset="1" stop-color="#b4b0e4"/></linearGradient></defs>
<path d="M1.5 1.5 H11.5 V14.5 L9.5 14 L7.5 15 L5 14 L3 15.2 L1.5 14.5 Z" fill="url(#gtl)" stroke="#404040" stroke-width="1"/>
<path d="M3.5 4.5H9.5M3.5 6.5H9.5M3.5 8.5H9.5M3.5 10.5H9.5" stroke="#3a3a3a" stroke-width="0.9"/></svg>
<svg class="i" style="left:1119px;top:72px" width="15" height="15" viewBox="0 0 15 15" ><circle cx="7.2" cy="7.3" r="6" fill="#fff" stroke="#2a9050" stroke-width="1.1"/>
<circle cx="7.2" cy="7.3" r="3.4" fill="#fff" stroke="#3a9a5a" stroke-width="1"/>
<circle cx="7.2" cy="7.3" r="1.5" fill="#0e6a1e"/></svg>
<svg class="i" style="left:1177px;top:75px" width="10" height="5" viewBox="0 0 10 5" ><rect x="0.6" y="0.6" width="8.8" height="3.3" fill="#fff" stroke="#000" stroke-width="1.2"/></svg>
<svg class="i" style="left:1203px;top:75px" width="10" height="10" viewBox="0 0 10 10" ><rect x="0.6" y="0.6" width="8.8" height="8.8" fill="#fff" stroke="#000" stroke-width="1.2"/><path d="M1 2.6H9" stroke="#000" stroke-width="1"/></svg>
<svg class="i" style="left:1170px;top:103px" width="14" height="14" viewBox="0 0 14 14" ><defs><radialGradient id="gsg" cx="0.45" cy="0.4" r="0.6"><stop offset="0" stop-color="#e4e4e4"/><stop offset="1" stop-color="#c4c4c4"/></radialGradient><radialGradient id="gsp" cx="0.45" cy="0.4" r="0.6"><stop offset="0" stop-color="#cfc8ee"/><stop offset="1" stop-color="#a89ed6"/></radialGradient></defs>
<circle cx="4" cy="2.5" r="3" fill="url(#gsg)" stroke="#c2c2c2" stroke-width="0.5"/>
<circle cx="10.3" cy="5.3" r="3.1" fill="url(#gsg)" stroke="#c2c2c2" stroke-width="0.5"/>
<circle cx="5.2" cy="9.4" r="3.3" fill="url(#gsp)"/>
<path d="M2.6 8.6H7.8M2.6 10.6H7.8" stroke="#c8c0ea" stroke-width="0.7"/></svg>
<svg class="i" style="left:1205px;top:104px" width="11" height="6" viewBox="0 0 11 6" ><path d="M1 0.8 H10 L5.5 5.2 Z" fill="#fff" stroke="#000" stroke-width="1.4" stroke-linejoin="round"/></svg>
<svg class="i" style="left:944px;top:75px" width="10" height="5" viewBox="0 0 10 5" ><rect x="0.6" y="0.6" width="8.8" height="3.3" fill="#fff" stroke="#000" stroke-width="1.2"/></svg>
<svg class="i" style="left:970px;top:75px" width="10" height="10" viewBox="0 0 10 10" ><rect x="0.6" y="0.6" width="8.8" height="8.8" fill="#fff" stroke="#000" stroke-width="1.2"/><path d="M1 2.6H9" stroke="#000" stroke-width="1"/></svg>
<svg class="i" style="left:315px;top:459px" width="16" height="16" viewBox="0 0 16 16" ><defs><linearGradient id="gpb" x1="0" y1="0" x2="0" y2="1"><stop offset="0" stop-color="#8c8a5a"/><stop offset="1" stop-color="#485a80"/></linearGradient></defs>
<path d="M1.5 14.5 V0.8 H11.5 Q13.5 1.5 13 4.5 Q12 7.5 12 9 Q12 12 14 14.5 Z" fill="#e8f4fc"/>
<path d="M11.5 0.8 Q13.5 1.5 13 4.5 Q12 7.5 12 9 Q12 12 14 14.5" fill="none" stroke="#a8b4c8" stroke-width="0.9"/>
<path d="M1.5 14.5 V1 H11" fill="none" stroke="url(#gpb)" stroke-width="1.1"/>
<path d="M1.5 14.5 H14" stroke="#4a5a80" stroke-width="1.1"/>
<path d="M10.4 1 V14 M1.8 7.4 H12.2" stroke="#a6b8dc" stroke-width="1"/>
<circle cx="6.3" cy="4.3" r="2.5" fill="#e2202e"/>
<path d="M3.8 14 V12 A2.5 2.5 0 0 1 8.8 12 V14 Z" fill="#f6a818"/></svg>
<svg class="i" style="left:408px;top:462px" width="10" height="10" viewBox="0 0 10 10" ><path d="M0.6 0.6H3L4.4 2.4H5.6L7 0.6H9.4V3L7.6 4.4V5.6L9.4 7V9.4H7L5.6 7.6H4.4L3 9.4H0.6V7L2.4 5.6V4.4L0.6 3Z" fill="#fff" stroke="#000" stroke-width="1.2" stroke-linejoin="round"/></svg>
<svg class="i" style="left:430px;top:459px" width="16" height="16" viewBox="0 0 16 16" ><rect x="3.5" y="2.5" width="10.5" height="12" rx="1" fill="#fdf6e6" stroke="#c8a878"/>
<rect x="6" y="0.8" width="5" height="3" rx="1" fill="#a8b4c8" stroke="#7a8aa8" stroke-width="0.6"/>
<path d="M8 6.5H12M8 8.5H12M8 10.5H12" stroke="#5a6a8a" stroke-width="0.8"/>
<path d="M0.8 9.5 L3.5 12.5 L8 6" stroke="#1e88e0" stroke-width="1.8" fill="none"/></svg>
<div class="txt" style="left:450px;top:459px;color:#4a4a4a;letter-spacing:-0.3px;">Tasks</div>
<svg class="i" style="left:497px;top:459px" width="15" height="15" viewBox="0 0 15 15" ><rect x="1" y="1" width="12" height="9.5" rx="1.2" fill="#f2f6fc" stroke="#2d5aa8" stroke-width="1.6"/>
<path d="M3.5 4.5H8M3.5 6.5H10" stroke="#2d4a88" stroke-width="0.9"/>
<rect x="5.5" y="10.5" width="3" height="2" fill="#2d5aa8"/><rect x="2.5" y="12.3" width="9" height="1.5" fill="#2d5aa8"/></svg>
<div class="txt" style="left:516px;top:459px;color:#4a4a4a;letter-spacing:0.05px;">Console</div>
<svg class="i" style="left:580px;top:459px" width="15" height="15" viewBox="0 0 15 15" ><rect x="0.5" y="1.5" width="13.5" height="12" fill="#f0f4fa" stroke="#5a6e9a"/>
<rect x="0.5" y="1.5" width="13.5" height="2.5" fill="#c8d4ea" stroke="#5a6e9a"/>
<path d="M4.5 4V13.5 M1 6.5H14 M1 9H14 M1 11.5H14" stroke="#a8b8d4" stroke-width="0.8"/></svg>
<div class="txt" style="left:600px;top:459px;color:#4a4a4a;letter-spacing:0.35px;">Properties</div>
<svg class="i" style="left:681px;top:460px" width="17" height="13" viewBox="0 0 17 13" ><rect x="1.7999999999999998" y="1.1" width="1.5" height="4.6" fill="#102a5c"/><path d="M1.0999999999999999 2.2 L2.4 1.1" stroke="#102a5c" stroke-width="0.9"/><ellipse cx="2.4" cy="9.55" rx="1.15" ry="1.85" fill="none" stroke="#102a5c" stroke-width="1.3"/><ellipse cx="6.4" cy="3.4" rx="1.15" ry="1.85" fill="none" stroke="#102a5c" stroke-width="1.3"/><rect x="5.800000000000001" y="7.250000000000001" width="1.5" height="4.6" fill="#102a5c"/><path d="M5.1000000000000005 8.350000000000001 L6.4 7.250000000000001" stroke="#102a5c" stroke-width="0.9"/><rect x="9.8" y="1.1" width="1.5" height="4.6" fill="#102a5c"/><path d="M9.1 2.2 L10.4 1.1" stroke="#102a5c" stroke-width="0.9"/><ellipse cx="10.4" cy="9.55" rx="1.15" ry="1.85" fill="none" stroke="#102a5c" stroke-width="1.3"/><ellipse cx="14.4" cy="3.4" rx="1.15" ry="1.85" fill="none" stroke="#102a5c" stroke-width="1.3"/><rect x="13.8" y="7.250000000000001" width="1.5" height="4.6" fill="#102a5c"/><path d="M13.1 8.350000000000001 L14.4 7.250000000000001" stroke="#102a5c" stroke-width="0.9"/></svg>
<div class="txt" style="left:701px;top:459px;color:#4a4a4a;letter-spacing:-0.25px;">Call Graph</div>
<svg class="i" style="left:1076px;top:459px" width="18" height="17" viewBox="0 0 18 17" ><path d="M0.5 3H6 M0.5 13H6" stroke="#4a7aa8" stroke-width="1.2"/>
<path d="M4.5 1 L7 3 L4.5 5 Z M4.5 11 L7 13 L4.5 15Z" fill="#2a5a80"/>
<path d="M10 0.5V5.5 M10 10.5V15.5" stroke="#4a5a7a" stroke-width="1.2"/>
<path d="M5 6.8 H11.5 V4.5 L16 8 L11.5 11.5 V9.2 H5 Z" fill="#fcefc0" stroke="#c8901c" stroke-width="1" stroke-linejoin="round"/></svg>
<div class="abs" style="left:1104px;top:457px;width:1px;height:21px;background:#f2f2f2"></div>
<svg class="i" style="left:1117px;top:461px" width="14" height="14" viewBox="0 0 14 14" ><defs><radialGradient id="gsg" cx="0.45" cy="0.4" r="0.6"><stop offset="0" stop-color="#e4e4e4"/><stop offset="1" stop-color="#c4c4c4"/></radialGradient><radialGradient id="gsp" cx="0.45" cy="0.4" r="0.6"><stop offset="0" stop-color="#cfc8ee"/><stop offset="1" stop-color="#a89ed6"/></radialGradient></defs>
<circle cx="4" cy="2.5" r="3" fill="url(#gsg)" stroke="#c2c2c2" stroke-width="0.5"/>
<circle cx="10.3" cy="5.3" r="3.1" fill="url(#gsg)" stroke="#c2c2c2" stroke-width="0.5"/>
<circle cx="5.2" cy="9.4" r="3.3" fill="url(#gsp)"/>
<path d="M2.6 8.6H7.8M2.6 10.6H7.8" stroke="#c8c0ea" stroke-width="0.7"/></svg>
<svg class="i" style="left:1151px;top:462px" width="11" height="6" viewBox="0 0 11 6" ><path d="M1 0.8 H10 L5.5 5.2 Z" fill="#fff" stroke="#000" stroke-width="1.4" stroke-linejoin="round"/></svg>
<svg class="i" style="left:1177px;top:462px" width="10" height="5" viewBox="0 0 10 5" ><rect x="0.6" y="0.6" width="8.8" height="3.3" fill="#fff" stroke="#000" stroke-width="1.2"/></svg>
<svg class="i" style="left:1203px;top:462px" width="10" height="10" viewBox="0 0 10 10" ><rect x="0.6" y="0.6" width="8.8" height="8.8" fill="#fff" stroke="#000" stroke-width="1.2"/><path d="M1 2.6H9" stroke="#000" stroke-width="1"/></svg>
<svg class="i" style="left:3px;top:676px" width="17" height="13" viewBox="0 0 17 13" ><rect x="3.5" y="0.5" width="5.5" height="2.5" rx="0.6" fill="#fdf4d8" stroke="#d4aa5a" stroke-width="1"/>
<rect x="2" y="3" width="11" height="7.5" fill="#fde7a0"/>
<path d="M0.5 2.8H14.5" stroke="#8c7272" stroke-width="1.1"/>
<path d="M1.5 3.2 V11.5" stroke="#2c44b8" stroke-width="1.2"/>
<path d="M2.2 11.6 L4.3 6.2 H15.9 L11.9 11.6 Z" fill="#aad4f8" stroke="#2c44b8" stroke-width="1.1" stroke-linejoin="round"/></svg>
<svg class="i" style="left:910px;top:676px" width="2" height="18" viewBox="0 0 2 18" ><rect x="0" y="0" width="2" height="3" fill="#a19c8c"/><rect x="0" y="0" width="2" height="1" fill="#c2beb2"/><rect x="0" y="2" width="2" height="1" fill="#898472"/><rect x="0" y="5" width="2" height="3" fill="#a19c8c"/><rect x="0" y="5" width="2" height="1" fill="#c2beb2"/><rect x="0" y="7" width="2" height="1" fill="#898472"/><rect x="0" y="10" width="2" height="3" fill="#a19c8c"/><rect x="0" y="10" width="2" height="1" fill="#c2beb2"/><rect x="0" y="12" width="2" height="1" fill="#898472"/><rect x="0" y="15" width="2" height="3" fill="#a19c8c"/><rect x="0" y="15" width="2" height="1" fill="#c2beb2"/><rect x="0" y="17" width="2" height="1" fill="#898472"/></svg>

<!-- Status -->
<div class="txt" style="left:24px;top:674px;letter-spacing:0.05px">rviz2_ws</div>
</body></html>
